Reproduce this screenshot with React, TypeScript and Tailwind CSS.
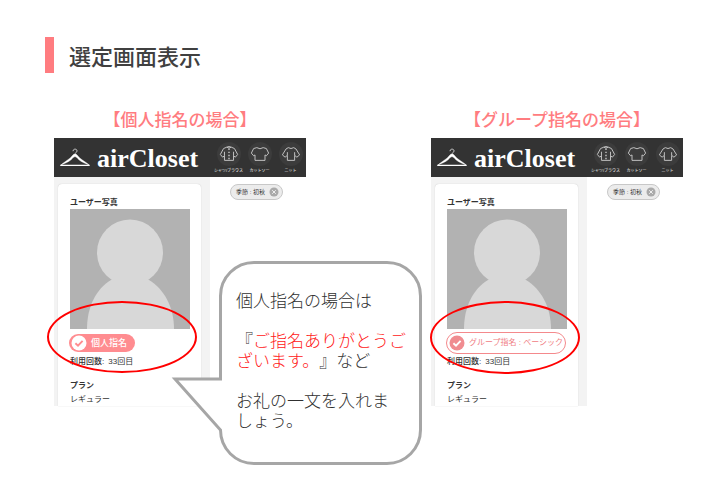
import React from "react";

const garments = [
  {
    label: "シャツ/ブラウス",
    path: "M8.5 3.5 L5 5 L1.5 11.5 L4 14.5 L6 13 V18 H16 V13 L18 14.5 L20.5 11.5 L17 5 L13.5 3.5 Q11 5.5 8.5 3.5 Z M8.5 3.5 Q11 2 13.5 3.5 M6 13 V8.5 M16 13 V8.5",
    dots: true,
  },
  {
    label: "カットソー",
    path: "M7.5 4 L4 5 L1.5 10 L4 13 L5.5 12 V18 H16.5 V12 L18 13 L20.5 10 L18 5 L14.5 4 Q11 6.5 7.5 4 Z",
    dots: false,
  },
  {
    label: "ニット",
    path: "M8 4 L5.5 5.5 L1.5 12 L4.5 14.5 L7 12.5 V18 H15 V12.5 L17.5 14.5 L20.5 12 L16.5 5.5 L14 4 Q11 6 8 4 Z M7 12.5 V9 M15 12.5 V9",
    dots: false,
  },
];

const Hanger = () => (
  <svg
    className="h-5 w-8 shrink-0"
    viewBox="0 0 32 20"
    fill="none"
    stroke="#fff"
    strokeLinecap="round"
    strokeLinejoin="round"
  >
    <path d="M14 2.8 C14 0.4 18.2 0.6 18 3 C17.9 4.6 16 4.4 16 6.5" strokeWidth="1" stroke="#ccc" />
    <path d="M2 17.4 H30" strokeWidth="1.3" />
    <path d="M1.5 17.2 C4 14.8 8 12.8 11 10.2 C13.5 8 14 6 16 6 C18 6 18.5 8 21 10.2 C24 12.8 28 14.8 30.5 17.2 C26 15.4 21 13.4 19 10.8 C17.5 9.2 17 8.8 16 8.8 C15 8.8 14.5 9.2 13 10.8 C11 13.4 6 15.4 1.5 17.2 Z" fill="#fff" strokeWidth="0.4" />
  </svg>
);

const Check = ({ circle, mark }: { circle: string; mark: string }) => (
  <svg className="h-4 w-4 shrink-0" viewBox="0 0 16 16" fill="none">
    <circle cx="8" cy="8" r="7.5" fill={circle} />
    <path d="M4.4 8.2 L7 10.6 L11.6 5.8" stroke={mark} strokeWidth="1.9" />
  </svg>
);

const Silhouette = () => (
  <svg className="block h-[120px] w-[120px]" viewBox="0 0 120 120">
    <rect width="120" height="120" fill="#b2b2b2" />
    <circle cx="60" cy="43.5" r="33" fill="#d8d8d8" />
    <path d="M17 120 C17 98 26 80 41 71 H79 C94 80 104 98 104 120 Z" fill="#d8d8d8" />
  </svg>
);

const Screen = ({ badge }: { badge: React.ReactNode }) => (
  <div className="text-[8px] leading-3 text-[#333]">
    <header className="flex h-[39px] items-center bg-[#333] pl-[5px] text-white">
      <Hanger />
      <span className="ml-1.5 flex-1 pt-0.5 font-['Liberation_Serif'] text-[26px] leading-8 font-bold">
        airCloset
      </span>
      <nav className="flex">
        {garments.map((item) => (
          <button
            key={item.label}
            className="flex w-[31px] flex-col items-center gap-0.5 text-[4px] leading-[6px] whitespace-nowrap"
          >
            <span className="flex h-6 w-6 items-center justify-center rounded-full bg-[#3c3c3c]">
              <svg
                className="h-5 w-5"
                viewBox="0 0 22 22"
                fill="none"
                stroke="#c0c0c0"
                strokeWidth="1.1"
                strokeLinejoin="round"
              >
                <path d={item.path} />
                {item.dots && <path d="M11 5 V18" strokeWidth="1.6" strokeDasharray="1.6 1.8" />}
              </svg>
            </span>
            <span>{item.label}</span>
          </button>
        ))}
      </nav>
    </header>

    <div className="flex">
      <aside className="w-[156px] bg-[#f3f3f3] pt-[7px] pr-[9px] pl-1">
        <section className="h-[222px] rounded-t bg-white px-3 pt-[13px] shadow-[0_0_1px_#bbb]">
          <h3 className="font-bold">ユーザー写真</h3>
          <Silhouette />
          <div className="-mx-px flex h-[27px] items-center">{badge}</div>
          <p>
            <span className="font-medium">利用回数:</span>
            <span className="ml-1">33回目</span>
          </p>
          <h3 className="mt-3 font-bold">プラン</h3>
          <p className="mt-0.5">レギュラー</p>
        </section>
      </aside>
      <div className="pt-[7px] pl-5">
        <div className="flex h-4 items-center gap-1 rounded-full border border-[#c8c8c8] bg-[#ececec] pr-[3px] pl-[5px] text-[6px] whitespace-nowrap">
          季節 : 初秋
          <button aria-label="削除">
            <svg className="block h-[10px] w-[10px]" viewBox="0 0 10 10">
              <circle cx="5" cy="5" r="4.5" fill="#aaa" />
              <path d="M3.2 3.2 L6.8 6.8 M6.8 3.2 L3.2 6.8" stroke="#eee" strokeWidth="1" />
            </svg>
          </button>
        </div>
      </div>
    </div>
  </div>
);

const Callout = () => (
  <div className="absolute top-[122px] left-[117px] h-[206px] w-[252px]">
    <svg className="absolute inset-0 h-full w-full" viewBox="0 0 252 206">
      <path
        d="M83 2.5 H216 A33.5 33.5 0 0 1 249.5 36 V170 A33.5 33.5 0 0 1 216 203.5 H83 A33.5 33.5 0 0 1 49.5 170 L4 119 H49.5 V36 A33.5 33.5 0 0 1 83 2.5 Z"
        fill="#fff"
        stroke="#a6a6a6"
        strokeWidth="3"
      />
    </svg>
    <div className="relative space-y-5 pt-8 pl-[65px] text-[17px] leading-5 font-light whitespace-nowrap text-[#303030] [text-spacing-trim:space-all]">
      <p>個人指名の場合は</p>
      <p>
        『<span className="text-[#ff2020]">ご指名ありがとうご<br />ざいます。</span>』など
      </p>
      <p>
        お礼の一文を入れま
        <br />
        しょう。
      </p>
    </div>
  </div>
);

const App = () => {
  return (
    <main className="min-h-screen bg-white pt-[37px] font-['Liberation_Sans','Noto_Sans_CJK_JP',sans-serif]">
      <h1 className="ml-[45px] flex h-9 items-center border-l-[9px] border-[#ff7c80] pt-1 pl-[15px] text-[22px] font-medium text-[#404040]">
        選定画面表示
      </h1>

      <div className="mt-9 flex justify-between pr-[37px] pl-[54px]">
        {/* Individual nomination */}
        <section className="w-[252px]">
          <h2 className="mb-[5px] text-center text-[17px] leading-6 font-medium text-[#ff7c80]">
            【個人指名の場合】
          </h2>
          <div className="relative">
            <Screen
              badge={
                <span className="flex h-[18px] items-center gap-1 rounded-full bg-[#ff8c90] pr-2 pl-0.5 text-[9px] font-medium text-white">
                  <Check circle="#fff" mark="#ff8c90" />
                  個人指名
                </span>
              }
            />
            <div className="absolute top-[163px] -left-[7px] h-[72px] w-[150px] rounded-[50%] border-2 border-[#f00]" />
            <Callout />
          </div>
        </section>

        {/* Group nomination */}
        <section className="w-[252px]">
          <h2 className="mb-[5px] text-center text-[17px] leading-6 font-medium text-[#ff7c80]">
            【グループ指名の場合】
          </h2>
          <div className="relative">
            <Screen
              badge={
                <span className="flex h-[22px] items-center gap-1 rounded-full border border-[#f4898c] bg-white px-0.5 text-[8px] whitespace-nowrap text-[#f08084]">
                  <Check circle="#f08c90" mark="#fff" />
                  グループ指名 : ベーシック
                </span>
              }
            />
            <div className="absolute top-[163px] -left-px h-[73px] w-[150px] rounded-[50%] border-2 border-[#f00]" />
          </div>
        </section>
      </div>
    </main>
  );
};

export default App;
